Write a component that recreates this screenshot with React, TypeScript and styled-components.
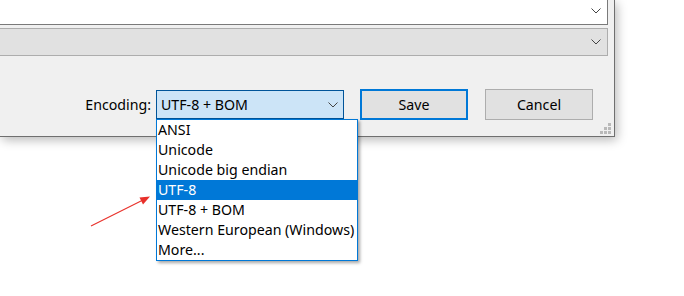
import styled, { createGlobalStyle } from 'styled-components'

const GlobalStyle = createGlobalStyle`
  html, body {
    margin: 0;
    padding: 0;
    background: #ffffff;
  }
  body {
    font-family: 'Noto Sans', 'Open Sans', sans-serif;
    font-size: 14.2px;
    color: #000;
  }
`

const encodings = [
  'ANSI',
  'Unicode',
  'Unicode big endian',
  'UTF-8',
  'UTF-8 + BOM',
  'Western European (Windows)',
  'More...',
]

const Chevron = () => (
  <svg width="10" height="6" viewBox="0 0 10 6">
    <path d="M0.5 0.5 L5 5 L9.5 0.5" fill="none" stroke="#444" strokeWidth="1" />
  </svg>
)

const Grip = () => (
  <svg width="11" height="11" viewBox="0 0 11 11">
    <rect x="8" y="0" width="3" height="3" fill="#b9b9b9" />
    <rect x="4" y="4" width="3" height="3" fill="#b9b9b9" />
    <rect x="8" y="4" width="3" height="3" fill="#b9b9b9" />
    <rect x="0" y="8" width="3" height="3" fill="#b9b9b9" />
    <rect x="4" y="8" width="3" height="3" fill="#b9b9b9" />
    <rect x="8" y="8" width="3" height="3" fill="#b9b9b9" />
  </svg>
)

export default function App() {
  return (
    <Page>
      <GlobalStyle />
      <Dialog>
        <WideCombo $variant="edit">
          <Chevron />
        </WideCombo>
        <WideCombo $variant="disabled">
          <Chevron />
        </WideCombo>
        <Footer>
          <Label>Encoding:</Label>
          <ComboWrap>
            <EncodingCombo>
              <span>UTF-8 + BOM</span>
              <Chevron />
            </EncodingCombo>
            <DropList>
              {encodings.map((name) => (
                <DropItem key={name} $selected={name === 'UTF-8'}>
                  {name}
                </DropItem>
              ))}
            </DropList>
          </ComboWrap>
          <Button $primary>Save</Button>
          <Button>Cancel</Button>
        </Footer>
        <GripCorner>
          <Grip />
        </GripCorner>
      </Dialog>
      <Arrow width="70" height="40" viewBox="0 0 70 40">
        <line x1="3" y1="38" x2="54" y2="12.5" stroke="#e8302a" strokeWidth="1.2" />
        <polygon points="62,8.5 51.5,9.5 55,16.5" fill="#e8302a" />
      </Arrow>
    </Page>
  )
}

const Page = styled.div`
  position: relative;
  width: 684px;
  height: 296px;
  overflow: hidden;
  background: #fff;
`

const Dialog = styled.div`
  position: relative;
  box-sizing: border-box;
  width: 615px;
  height: 137px;
  padding-right: 6px;
  background: #f0f0f0;
  border-right: 1px solid #6f6f6f;
  border-bottom: 1px solid #6f6f6f;
  box-shadow: 2px 3px 10px rgba(0, 0, 0, 0.28);
`

const WideCombo = styled.div<{ $variant: 'edit' | 'disabled' }>`
  box-sizing: border-box;
  display: flex;
  align-items: center;
  justify-content: flex-end;
  padding-right: 6px;
  height: ${(p) => (p.$variant === 'edit' ? '25px' : '28px')};
  margin-top: ${(p) => (p.$variant === 'edit' ? '0' : '3px')};
  background: ${(p) => (p.$variant === 'edit' ? '#ffffff' : '#e1e1e1')};
  border: 1px solid ${(p) => (p.$variant === 'edit' ? '#7a7a7a' : '#adadad')};
  border-left: none;
  border-top: ${(p) => (p.$variant === 'edit' ? 'none' : undefined)};
  svg {
    margin-top: ${(p) => (p.$variant === 'edit' ? '-2px' : '0')};
  }
`

const Footer = styled.div`
  display: flex;
  align-items: center;
  justify-content: flex-end;
  margin-top: 33px;
  padding-right: 15px;
`

const Label = styled.span`
  margin-right: 5px;
  line-height: 20px;
`

const ComboWrap = styled.div`
  position: relative;
  margin-right: 16px;
`

const EncodingCombo = styled.div`
  box-sizing: border-box;
  display: flex;
  align-items: center;
  justify-content: space-between;
  width: 188px;
  height: 29px;
  padding: 0 5px 0 4px;
  background: #cce4f7;
  border: 1px solid #005499;
  span {
    line-height: 20px;
  }
`

const DropList = styled.div`
  position: absolute;
  top: 29px;
  left: 0;
  z-index: 2;
  box-sizing: border-box;
  width: 202px;
  padding: 0;
  background: #fff;
  border: 1px solid #0078d7;
  box-shadow: 2px 2px 3px rgba(0, 0, 0, 0.35);
`

const DropItem = styled.div<{ $selected?: boolean }>`
  height: 20px;
  line-height: 20px;
  padding-left: 1px;
  white-space: nowrap;
  background: ${(p) => (p.$selected ? '#0078d7' : 'transparent')};
  color: ${(p) => (p.$selected ? '#ffffff' : '#000000')};
`

const Button = styled.div<{ $primary?: boolean }>`
  box-sizing: border-box;
  display: flex;
  align-items: center;
  justify-content: center;
  width: 108px;
  height: 31px;
  margin-left: ${(p) => (p.$primary ? '0' : '17px')};
  background: #e1e1e1;
  border: ${(p) => (p.$primary ? '2px solid #0078d7' : '1px solid #adadad')};
`

const GripCorner = styled.div`
  position: absolute;
  right: 3px;
  bottom: 2px;
  line-height: 0;
`

const Arrow = styled.svg`
  position: absolute;
  left: 88px;
  top: 188px;
`
